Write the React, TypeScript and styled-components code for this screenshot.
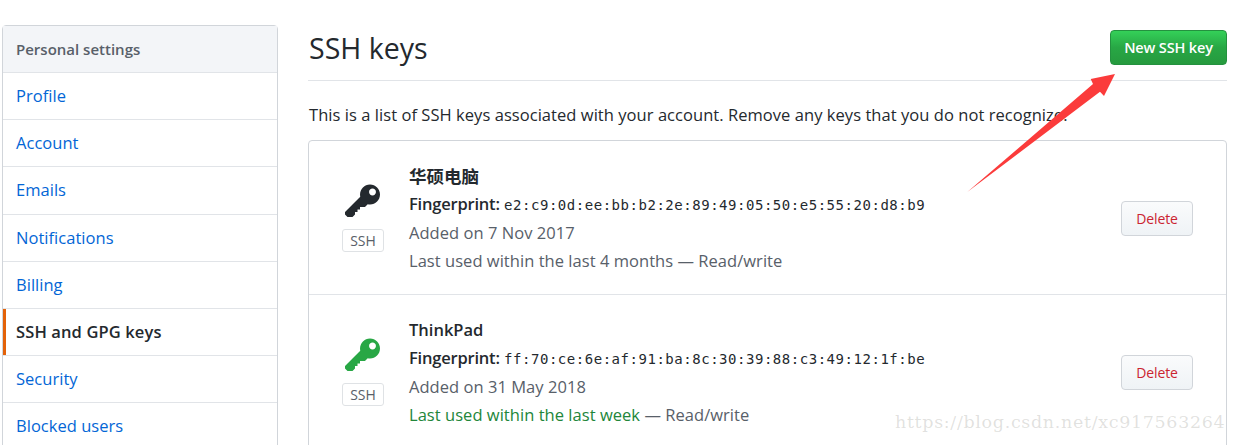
import React from "react";
import styled, { createGlobalStyle } from "styled-components";

const Global = createGlobalStyle`
  html, body { margin: 0; padding: 0; background: #fff; height: 445px; overflow: hidden; }
  body { font-family: "Open Sans", "Noto Sans CJK SC", sans-serif; color: #24292e; }
`;
const Page = styled.div`
  position: relative; display: flex; align-items: flex-start; gap: 30px;
  width: 1236px; height: 445px; overflow: hidden; padding: 25px 0 0 2px; box-sizing: border-box;
`;
const Sidebar = styled.nav`
  width: 276px; flex: none; border: 1px solid #d1d5da; border-radius: 4px; box-sizing: border-box;
`;
const SideHeader = styled.div`
  height: 47px; box-sizing: border-box; background: #f3f5f8; border-bottom: 1px solid #e1e4e8;
  padding-left: 13px; display: flex; align-items: center; font-size: 15px; font-weight: 600; color: #586069;
`;
const SideItem = styled.a<{ $active?: boolean }>`
  height: 47.2px; box-sizing: border-box; border-bottom: 1px solid #e1e4e8; display: flex; align-items: center;
  padding: 0 0 1px 13px; font-size: 16.5px;
  letter-spacing: ${p => (p.$active ? "0.12px" : "0.03px")};
  color: ${p => (p.$active ? "#24292e" : "#0366d6")};
  font-weight: ${p => (p.$active ? 600 : 400)};
  box-shadow: ${p => (p.$active ? "inset 3px 0 0 #e36209" : "none")};
`;
const Main = styled.main`
  width: 919px; flex: none;
`;
const TitleBar = styled.div`
  height: 56px; box-sizing: border-box; border-bottom: 1px solid #e1e4e8; display: flex;
  justify-content: space-between; align-items: flex-start;
`;
const Title = styled.h2`
  margin: 2px 0 0 1px; font-size: 28.5px; font-weight: 400; line-height: 42px;
`;
const NewButton = styled.a`
  margin-top: 5px; width: 117px; height: 35px; box-sizing: border-box; border: 1px solid #24913f; border-radius: 4px;
  background: linear-gradient(#34d058, #28a745 50%, #269a3e); color: #fff; font-size: 14.5px; font-weight: 600;
  display: flex; align-items: center; justify-content: center; letter-spacing: -0.15px; padding-bottom: 1px;
`;
const Intro = styled.p`
  margin: 20px 0 0 1px; font-size: 16.5px; line-height: 27px; letter-spacing: 0.05px; white-space: nowrap;
`;
const Card = styled.section`
  margin-top: 12px; border: 1px solid #d1d5da; border-radius: 4px; box-sizing: border-box;
`;
const KeyRow = styled.div<{ $last?: boolean }>`
  display: flex; align-items: flex-start; height: 154px; box-sizing: border-box; padding: 21px 33px 0 33px;
  border-bottom: ${p => (p.$last ? "none" : "1px solid #e1e4e8")};
`;
const KeyBadgeCol = styled.div`
  width: 67px; flex: none; display: flex; flex-direction: column; align-items: flex-start; padding-top: 20px;
`;
const KeySvg = styled.svg<{ $color: string }>`
  display: block; width: 35px; height: 40px; margin-left: 3px; fill: ${p => p.$color};
`;
const Badge = styled.span`
  margin-top: 7px; width: 42px; height: 23px; box-sizing: border-box; border: 1px solid #dfe2e5; border-radius: 3px;
  font-size: 14px; color: #586069; display: flex; align-items: center; justify-content: center;
`;
const Info = styled.div`
  flex: 1; min-width: 0;
`;
const KeyName = styled.div<{ $cjk?: boolean }>`
  font-size: ${p => (p.$cjk ? "17.5px" : "16.5px")};
  font-weight: ${p => (p.$cjk ? 700 : 600)};
  line-height: 28px; letter-spacing: 0;
`;
const Line = styled.div`
  font-size: 16.5px; line-height: 28px; letter-spacing: 0.04px; color: #586069; white-space: nowrap;
`;
const Strong = styled.span`
  font-weight: 600; color: #24292e; letter-spacing: -0.2px;
`;
const Mono = styled.code`
  font-family: "DejaVu Sans Mono", monospace; font-size: 14px; letter-spacing: 0.53px; color: #24292e;
`;
const Green = styled.span`
  color: #22863a;
`;
const DeleteButton = styled.a`
  width: 72px; height: 35px; box-sizing: border-box; margin-top: 39px; flex: none; border: 1px solid #d1d5da; border-radius: 4px;
  background: linear-gradient(#fafbfc, #eff3f6); color: #cb2431; font-size: 14px; letter-spacing: -0.1px;
  display: flex; align-items: center; justify-content: center;
`;
const Arrow = styled.svg`
  position: absolute; left: 960px; top: 70px; width: 160px; height: 125px; fill: #fb3b3b;
`;
const Watermark = styled.div`
  position: absolute; left: 895px; top: 412px; font-family: "DejaVu Serif", serif; font-size: 17.5px; letter-spacing: 0.66px;
  color: rgba(120, 120, 110, 0.22); white-space: nowrap;
`;

const keyPath =
  "M12.83 2.17C12.08 1.42 11.14 1.03 10 1c-1.13.03-2.08.42-2.83 1.17S6.04 3.86 6.01 5c0 .3.03.59.09.89L0 12v1l1 1h2l1-1v-1h1v-1h1v-1h2l1.09-1.11c.3.08.59.11.91.11 1.14-.03 2.08-.42 2.83-1.17S13.97 6.14 14 5c-.03-1.14-.42-2.08-1.17-2.83zM11 5.38c-.77 0-1.38-.61-1.38-1.38 0-.77.61-1.38 1.38-1.38.77 0 1.38.61 1.38 1.38 0 .77-.61 1.38-1.38 1.38z";

const KeyIcon = ({ color }: { color: string }) => (
  <KeySvg $color={color} viewBox="0 0 14 16"><path fillRule="evenodd" d={keyPath} /></KeySvg>
);

const items = ["Profile", "Account", "Emails", "Notifications", "Billing", "SSH and GPG keys", "Security", "Blocked users"];

export default function App() {
  return (
    <>
      <Global />
      <Page>
        <Sidebar>
          <SideHeader>Personal settings</SideHeader>
          {items.map(i => (
            <SideItem key={i} $active={i === "SSH and GPG keys"}>{i}</SideItem>
          ))}
        </Sidebar>
        <Main>
          <TitleBar>
            <Title>SSH keys</Title>
            <NewButton>New SSH key</NewButton>
          </TitleBar>
          <Intro>This is a list of SSH keys associated with your account. Remove any keys that you do not recognize.</Intro>
          <Card>
            <KeyRow>
              <KeyBadgeCol>
                <KeyIcon color="#24292e" />
                <Badge>SSH</Badge>
              </KeyBadgeCol>
              <Info>
                <KeyName $cjk>华硕电脑</KeyName>
                <Line><Strong>Fingerprint:</Strong> <Mono>e2:c9:0d:ee:bb:b2:2e:89:49:05:50:e5:55:20:d8:b9</Mono></Line>
                <Line>Added on 7 Nov 2017</Line>
                <Line>Last used within the last 4 months — Read/write</Line>
              </Info>
              <DeleteButton>Delete</DeleteButton>
            </KeyRow>
            <KeyRow $last>
              <KeyBadgeCol>
                <KeyIcon color="#28a745" />
                <Badge>SSH</Badge>
              </KeyBadgeCol>
              <Info>
                <KeyName>ThinkPad</KeyName>
                <Line><Strong>Fingerprint:</Strong> <Mono>ff:70:ce:6e:af:91:ba:8c:30:39:88:c3:49:12:1f:be</Mono></Line>
                <Line>Added on 31 May 2018</Line>
                <Line><Green>Last used within the last week</Green> — Read/write</Line>
              </Info>
              <DeleteButton>Delete</DeleteButton>
            </KeyRow>
          </Card>
        </Main>
        <Arrow viewBox="0 0 160 125"><polygon points="7.3,122 133,14 130.7,9 155,4 144,26 140,21.7" /></Arrow>
        <Watermark>https://blog.csdn.net/xc917563264</Watermark>
      </Page>
    </>
  );
}
